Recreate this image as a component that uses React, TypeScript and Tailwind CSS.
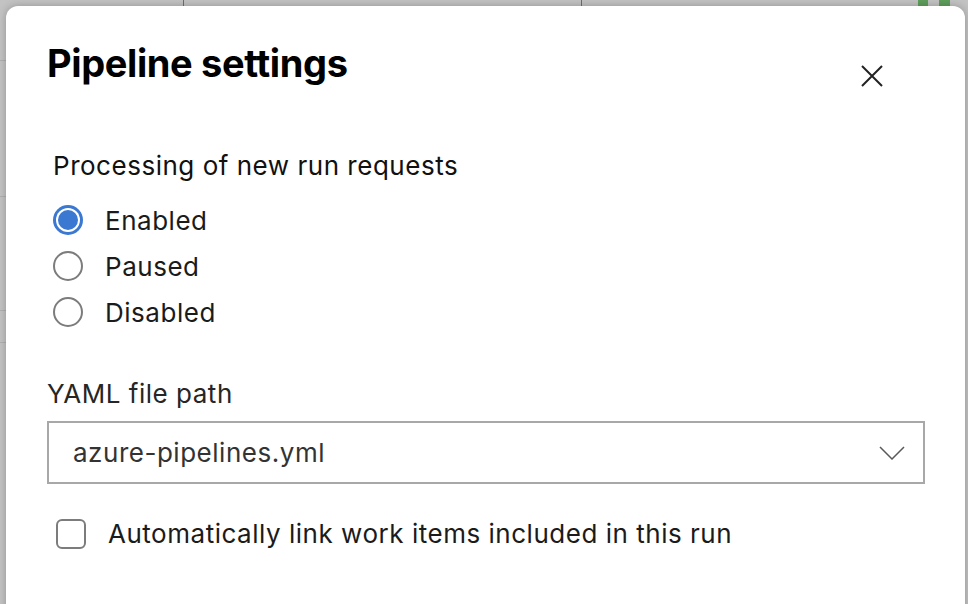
import { useState } from "react";

const options = ["Enabled", "Paused", "Disabled"];

const Radio = ({ checked }: { checked: boolean }) =>
  checked ? (
    <span className="flex h-[30px] w-[30px] items-center justify-center rounded-full bg-[#3a78d2]">
      <span className="flex h-[24px] w-[24px] items-center justify-center rounded-full bg-white">
        <span className="h-[20px] w-[20px] rounded-full bg-[#3a78d2]" />
      </span>
    </span>
  ) : (
    <span className="h-[30px] w-[30px] rounded-full border-[2px] border-[#7c7c7c] bg-white" />
  );

export default function App() {
  const [mode, setMode] = useState("Enabled");
  const [autoLink, setAutoLink] = useState(false);

  return (
    <div
      className="relative h-[604px] w-[968px] overflow-hidden bg-[#c3c3c3] pl-[6px] pt-[6px]"
      style={{ fontFamily: "Inter, 'Noto Sans', sans-serif" }}
    >
      {/* page behind the dialog */}
      <div className="absolute left-[183px] top-0 h-[10px] w-px bg-[#6e6e6e]" />
      <div className="absolute left-[581px] top-0 h-[10px] w-px bg-[#6e6e6e]" />
      <div className="absolute left-[918px] top-0 h-[10px] w-[10px] bg-[#5f9f5c]" />
      <div className="absolute left-[939px] top-0 h-[10px] w-[11px] bg-[#5f9f5c]" />
      <div className="absolute left-0 top-[60px] h-px w-[8px] bg-[#b0b0b0]" />
      <div className="absolute left-0 top-[196px] h-px w-[8px] bg-[#b0b0b0]" />
      <div className="absolute left-0 top-[310px] h-px w-[8px] bg-[#b0b0b0]" />
      <div className="absolute left-0 top-[342px] h-px w-[8px] bg-[#b0b0b0]" />

      <div className="relative h-[610px] w-[959px] rounded-t-[12px] bg-white px-[41px] pt-[34px] shadow-[0_0_8px_rgba(0,0,0,0.25)]">
        {/* header */}
        <div className="flex items-start justify-between">
          <h2 className="text-[38px] font-bold leading-[46px] tracking-[-0.01em] text-black">
            Pipeline settings
          </h2>
          <button className="mr-[41px] mt-[25px] flex h-[22px] w-[22px] items-center justify-center text-[#222]">
            <svg width="22" height="22" viewBox="0 0 22 22" fill="none" stroke="currentColor" strokeWidth="2">
              <path d="M1 1L21 21M21 1L1 21" />
            </svg>
          </button>
        </div>

        {/* run requests */}
        <div className="mt-[63px] pl-[6px]">
          <div className="text-[26px] leading-[32px] tracking-[0.02em] text-[#111]">
            Processing of new run requests
          </div>
          <div className="mt-[15px] flex flex-col">
            {options.map((o) => (
              <label
                key={o}
                onClick={() => setMode(o)}
                className="flex h-[46px] cursor-pointer items-center gap-[22px]"
              >
                <Radio checked={mode === o} />
                <span className="text-[26px] tracking-[0.02em] text-[#1b1b1b]">{o}</span>
              </label>
            ))}
          </div>
        </div>

        {/* yaml path */}
        <div className="mt-[43px] text-[26px] leading-[32px] tracking-[0.02em] text-[#262626]">
          YAML file path
        </div>
        <div className="mt-[11px] flex h-[63px] w-[878px] items-center justify-between border-[2px] border-[#a8a8a8] pl-[24px] pr-[18px]">
          <span className="text-[26px] tracking-[0.02em] text-[#333]">azure-pipelines.yml</span>
          <svg width="26" height="14" viewBox="0 0 26 14" fill="none" stroke="#5a5a5a" strokeWidth="1.5">
            <path d="M1 1L13 13L25 1" />
          </svg>
        </div>

        {/* auto link */}
        <label
          onClick={() => setAutoLink(!autoLink)}
          className="mt-[30px] flex cursor-pointer items-center gap-[22px] pl-[9px]"
        >
          <span
            className={
              autoLink
                ? "h-[30px] w-[30px] rounded-[6px] bg-[#3a78d2]"
                : "h-[30px] w-[30px] rounded-[6px] border-[2px] border-[#7c7c7c]"
            }
          />
          <span className="text-[26px] tracking-[0.02em] text-[#1b1b1b]">
            Automatically link work items included in this run
          </span>
        </label>
      </div>
    </div>
  );
}
